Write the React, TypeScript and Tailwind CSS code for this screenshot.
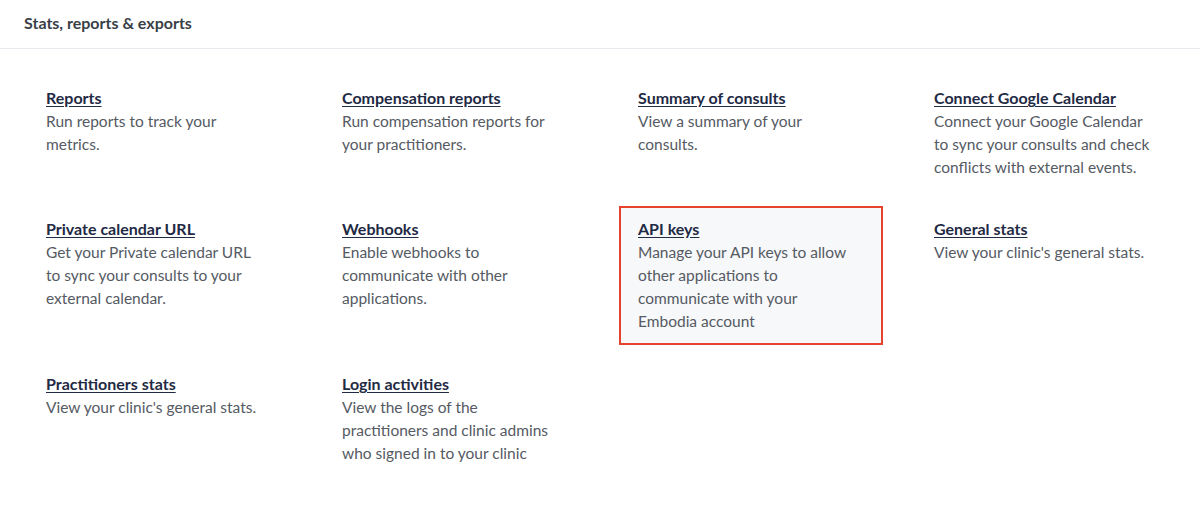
const ITEMS = [
  { title: 'Reports', text: 'Run reports to track your metrics.' },
  { title: 'Compensation reports', text: 'Run compensation reports for your practitioners.' },
  { title: 'Summary of consults', text: 'View a summary of your consults.' },
  {
    title: 'Connect Google Calendar',
    text: 'Connect your Google Calendar to sync your consults and check conflicts with external events.',
  },
  {
    title: 'Private calendar URL',
    text: 'Get your Private calendar URL to sync your consults to your external calendar.',
  },
  { title: 'Webhooks', text: 'Enable webhooks to communicate with other applications.' },
  {
    title: 'API keys',
    text: 'Manage your API keys to allow other applications to communicate with your Embodia account',
    active: true,
  },
  { title: 'General stats', text: "View your clinic's general stats." },
  { title: 'Practitioners stats', text: "View your clinic's general stats." },
  {
    title: 'Login activities',
    text: 'View the logs of the practitioners and clinic admins who signed in to your clinic',
  },
]

function Item({ title, text, active }: { title: string; text: string; active?: boolean }) {
  return (
    <div
      className={
        active
          ? 'ml-[3px] -mr-[3px] border-2 border-[#e5432d] bg-[#f7f8fa] px-[17px] pt-[9px] pb-[10px]'
          : 'px-[22px] py-[11px]'
      }
    >
      <a
        href="#"
        className="block text-[16px] font-bold leading-[24px] text-[#1f2a44] underline underline-offset-2"
      >
        {title}
      </a>
      <p className="max-w-[216px] text-[15.5px] leading-[23px] text-[#555a63]">{text}</p>
    </div>
  )
}

export default function App() {
  return (
    <div className="min-h-[513px] bg-white font-['Lato','Noto_Sans',sans-serif]">
      <div className="border-b border-[#e8ebf0] px-6 pt-[13px] pb-[16px]">
        <h2 className="text-[16px] font-bold leading-[19px] text-[#3a3f47]">Stats, reports &amp; exports</h2>
      </div>
      <div className="grid grid-cols-4 gap-x-8 gap-y-[16px] px-6 pt-[26px]">
        {ITEMS.map(item => (
          <Item key={item.title} {...item} />
        ))}
      </div>
    </div>
  )
}
